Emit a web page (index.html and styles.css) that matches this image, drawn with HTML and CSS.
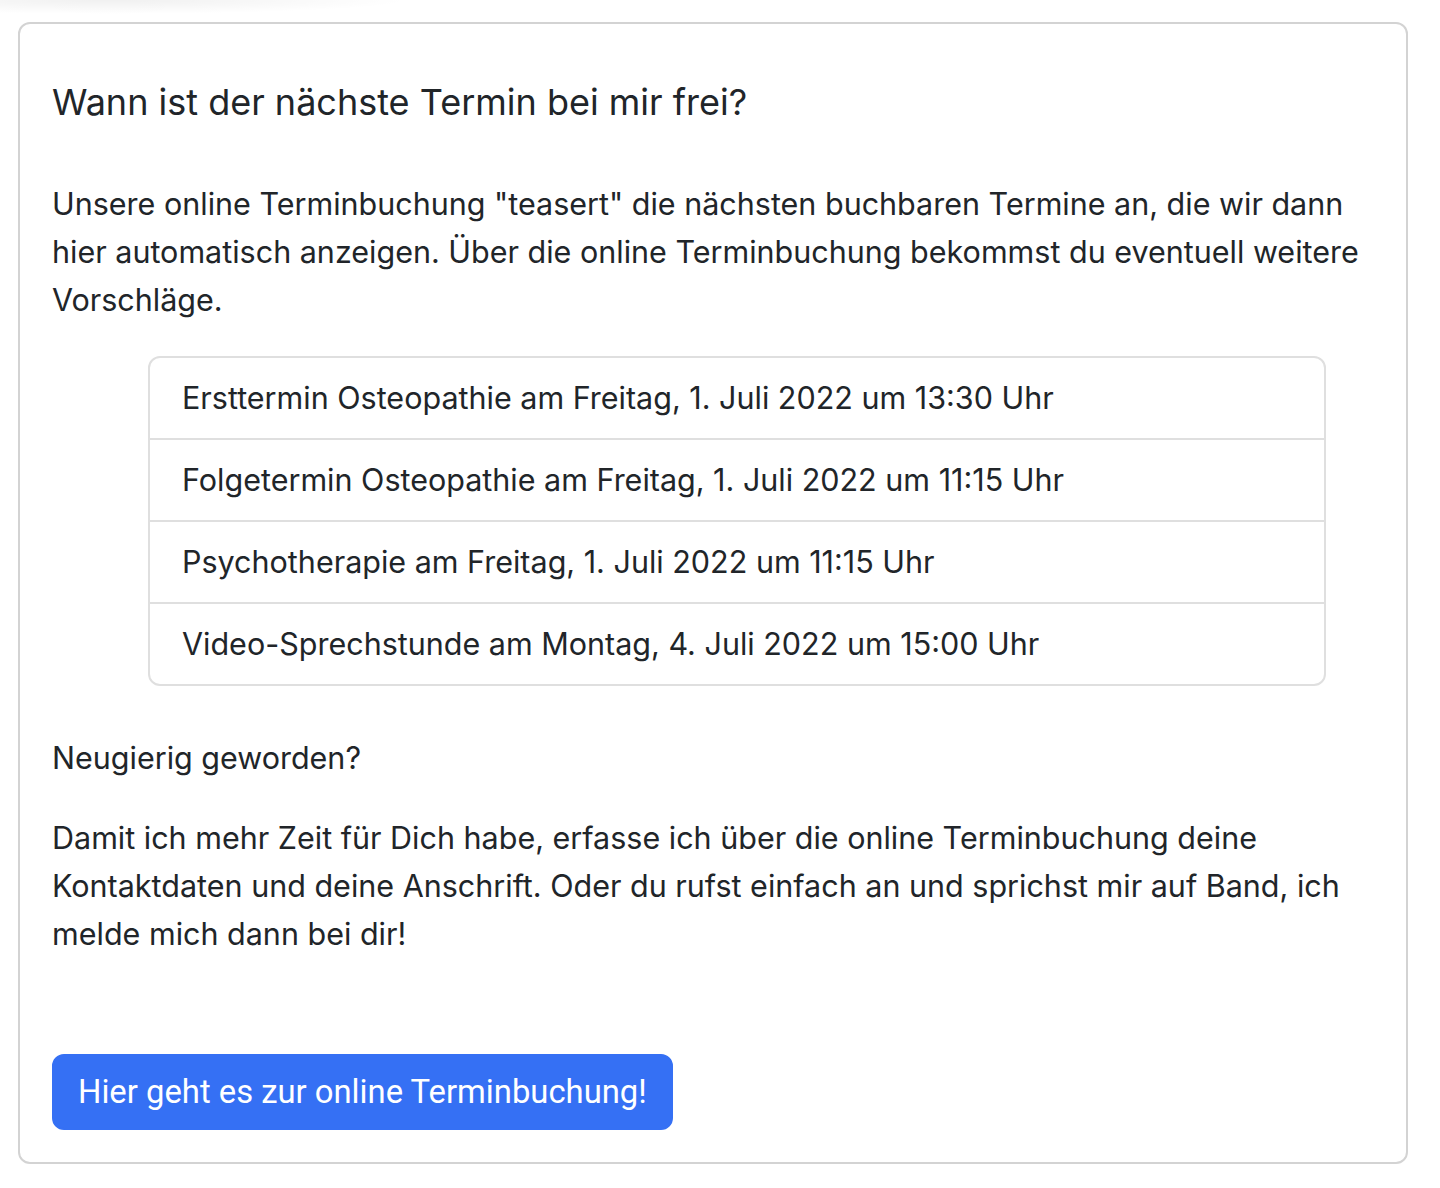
FILE: index.html
```html
<!DOCTYPE html>
<html lang="de">

<head>
    <meta charset="UTF-8">
    <meta name="viewport" content="width=device-width, initial-scale=1.0">
    <title>Termine</title>
    <link rel="stylesheet" href="styles.css">
</head>

<body>
    <div class="card">
        <div class="card-body">
            <h5 class="card-title">Wann ist der nächste Termin bei mir frei?</h5>
            <p>Unsere online Terminbuchung "teasert" die nächsten buchbaren Termine an, die wir dann hier automatisch anzeigen. Über die online Terminbuchung bekommst du eventuell weitere Vorschläge.</p>
            <ul class="list-group">
                <li class="list-group-item">Ersttermin Osteopathie am Freitag, 1. Juli 2022 um 13:30 Uhr</li>
                <li class="list-group-item">Folgetermin Osteopathie am Freitag, 1. Juli 2022 um 11:15 Uhr</li>
                <li class="list-group-item">Psychotherapie am Freitag, 1. Juli 2022 um 11:15 Uhr</li>
                <li class="list-group-item">Video-Sprechstunde am Montag, 4. Juli 2022 um 15:00 Uhr</li>
            </ul>
            <p>Neugierig geworden?</p>
            <p>Damit ich mehr Zeit für Dich habe, erfasse ich über die online Terminbuchung deine Kontaktdaten und deine Anschrift. Oder du rufst einfach an und sprichst mir auf Band, ich melde mich dann bei dir!</p>
            <a href="#" class="btn">Hier geht es zur online Terminbuchung!</a>
        </div>
    </div>
</body>

</html>
```

FILE: styles.css
```css
body {
    font-family: Inter, "Noto Sans", sans-serif;
    font-size: 30.5px;
    line-height: 48px;
    color: #212529;
    margin: 0;
    padding: 22px 32px 24px 18px;
    background-color: #fff;
    background-image: radial-gradient(ellipse 300px 14px at 110px 0, rgba(0, 0, 0, 0.06), rgba(0, 0, 0, 0));
    background-repeat: no-repeat;
}

.card {
    border: 2px solid #d3d3d3;
    border-radius: 12px;
    background: #fff;
}

.card-body {
    padding: 32px;
}

.card-title {
    font-size: 36px;
    font-weight: 400;
    line-height: 48px;
    margin: 22px 0 54px;
}

p {
    margin: 0 0 32px;
}

.list-group {
    list-style: none;
    padding: 0;
    margin: 0 48px 48px 96px;
    border: 2px solid #dfdfdf;
    border-radius: 12px;
}

.list-group-item {
    padding: 16px 32px;
    border-top: 2px solid #dfdfdf;
}

.list-group-item:first-child {
    border-top: none;
}

.btn {
    display: inline-block;
    margin-top: 64px;
    padding: 12px 24px;
    border: 2px solid #3570f4;
    border-radius: 12px;
    background-color: #3570f4;
    color: #fff;
    font-family: Roboto, sans-serif;
    font-size: 32.8px;
    line-height: 48px;
    text-decoration: none;
}
```
